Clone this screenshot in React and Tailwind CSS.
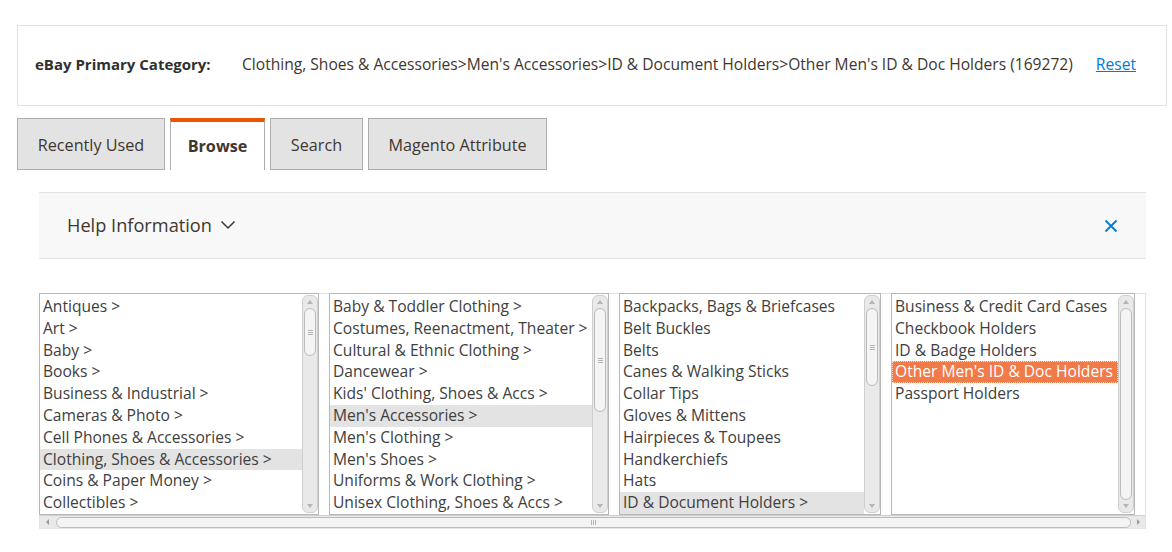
import React from 'react';

const col1 = ['Antiques >', 'Art >', 'Baby >', 'Books >', 'Business & Industrial >', 'Cameras & Photo >', 'Cell Phones & Accessories >', 'Clothing, Shoes & Accessories >', 'Coins & Paper Money >', 'Collectibles >'];
const col2 = ['Baby & Toddler Clothing >', 'Costumes, Reenactment, Theater >', 'Cultural & Ethnic Clothing >', 'Dancewear >', "Kids' Clothing, Shoes & Accs >", "Men's Accessories >", "Men's Clothing >", "Men's Shoes >", 'Uniforms & Work Clothing >', 'Unisex Clothing, Shoes & Accs >'];
const col3 = ['Backpacks, Bags & Briefcases', 'Belt Buckles', 'Belts', 'Canes & Walking Sticks', 'Collar Tips', 'Gloves & Mittens', 'Hairpieces & Toupees', 'Handkerchiefs', 'Hats', 'ID & Document Holders >'];
const col4 = ['Business & Credit Card Cases', 'Checkbook Holders', 'ID & Badge Holders', "Other Men's ID & Doc Holders", 'Passport Holders'];

const VScroll = ({ thumb, grip = true }) => (
    <div className="w-[16px] shrink-0 flex flex-col items-center bg-[#e9e9e9] border border-[#cfcfcf] rounded-[6px] my-[1px]">
        <svg width="8" height="12" viewBox="0 0 8 12" className="shrink-0"><path d="M1 8 L4 4 L7 8 Z" fill="#b5b5b5" /></svg>
        <div className="flex-1 w-full px-[1px] flex flex-col">
            <div className={`${thumb} w-full rounded-full bg-[#f4f4f4] border border-[#bcbcbc] flex items-center justify-center`}>
                {grip && (
                    <div className="flex flex-col gap-[1px]">
                        <div className="w-[5px] h-px bg-[#b5b5b5]" />
                        <div className="w-[5px] h-px bg-[#b5b5b5]" />
                        <div className="w-[5px] h-px bg-[#b5b5b5]" />
                    </div>
                )}
            </div>
        </div>
        <svg width="8" height="12" viewBox="0 0 8 12" className="shrink-0"><path d="M1 4 L4 8 L7 4 Z" fill="#b5b5b5" /></svg>
    </div>
);

const CategoryList = ({ items, width, thumb, grey, active, grip }) => (
    <div className={`${width} h-[222px] flex border border-[#b8b8b8] bg-white`}>
        <ul className="flex-1 overflow-hidden pt-[2px]">
            {items.map((item, i) => (
                <li
                    key={item}
                    className={`h-[21.8px] leading-[21.8px] px-[3px] whitespace-nowrap ${i === grey ? 'bg-[#e3e3e3]' : ''} ${i === active ? 'bg-[#f07a48] text-white outline outline-1 outline-dotted outline-[#ffd7c2] -outline-offset-1' : ''}`}
                >
                    {item}
                </li>
            ))}
        </ul>
        <VScroll thumb={thumb} grip={grip} />
    </div>
);

const App = () => {
    return (
        <div className="w-[1172px] h-[552px] bg-white text-[#41362f] overflow-hidden" style={{ fontFamily: '"Open Sans", "Noto Sans", sans-serif' }}>
            <div className="pt-[25px] pl-[17px] pr-[5px]">
                <div className="h-[81px] border border-[#e3e3e3] flex items-center pl-[17px] pr-[30px] pb-[2px] text-[15.6px]">
                    <span className="font-bold text-[15px] w-[207px] text-[#303030]">eBay Primary Category:</span>
                    <span className="flex-1">Clothing, Shoes &amp; Accessories&gt;Men's Accessories&gt;ID &amp; Document Holders&gt;Other Men's ID &amp; Doc Holders (169272)</span>
                    <a href="#" className="text-[#007bdb] underline">Reset</a>
                </div>

                <div className="flex gap-[5px] mt-[12px] text-[16.2px]">
                    <div className="w-[148px] h-[52px] flex items-center justify-center bg-[#e3e3e3] border border-[#adadad] pt-[2px]">Recently Used</div>
                    <div className="w-[95px] h-[52px] flex items-center justify-center bg-white border-x border-[#adadad] border-t-[4px] border-t-[#eb5202] font-bold">Browse</div>
                    <div className="w-[93px] h-[52px] flex items-center justify-center bg-[#e3e3e3] border border-[#adadad] pt-[2px]">Search</div>
                    <div className="w-[179px] h-[52px] flex items-center justify-center bg-[#e3e3e3] border border-[#adadad] pt-[2px]">Magento Attribute</div>
                </div>
            </div>

            <div className="ml-[39px] w-[1107px] mt-[22px]">
                <div className="h-[67px] bg-[#f8f8f8] border-y border-[#e3e3e3] flex items-center justify-between pl-[28px] pr-[28px]">
                    <div className="flex items-center gap-[8px] text-[18.2px]">
                        <span>Help Information</span>
                        <svg width="16" height="10" viewBox="0 0 16 10"><path d="M1.5 1.5 L8 8 L14.5 1.5" fill="none" stroke="#41362f" strokeWidth="1.5" /></svg>
                    </div>
                    <svg width="14" height="14" viewBox="0 0 14 14"><path d="M1.5 1.5 L12.5 12.5 M12.5 1.5 L1.5 12.5" stroke="#007bdb" strokeWidth="1.8" /></svg>
                </div>

                <div className="mt-[34px] border border-[#e3e3e3] text-[15.6px] text-[#404040]">
                    <div className="flex gap-[10px] -ml-px -mt-px">
                        <CategoryList items={col1} width="w-[280px]" thumb="h-[48px]" grey={7} />
                        <CategoryList items={col2} width="w-[280px]" thumb="h-[104px]" grey={5} />
                        <CategoryList items={col3} width="w-[262px]" thumb="h-[78px]" grey={9} />
                        <CategoryList items={col4} width="w-[244px]" thumb="h-full" active={3} grip={false} />
                    </div>
                    <div className="h-[13px] flex items-center bg-[#e9e9e9] border-t border-[#cfcfcf]">
                        <div className="w-[16px] flex justify-center">
                            <svg width="8" height="8" viewBox="0 0 8 8"><path d="M5 1 L2 4 L5 7 Z" fill="#9a9a9a" /></svg>
                        </div>
                        <div className="flex-1 h-[11px] rounded-full bg-[#f4f4f4] border border-[#bcbcbc] flex items-center justify-center gap-[1px]">
                            <div className="w-px h-[5px] bg-[#b5b5b5]" />
                            <div className="w-px h-[5px] bg-[#b5b5b5]" />
                            <div className="w-px h-[5px] bg-[#b5b5b5]" />
                        </div>
                        <div className="w-[14px] flex justify-center">
                            <svg width="8" height="8" viewBox="0 0 8 8"><path d="M3 1 L6 4 L3 7 Z" fill="#9a9a9a" /></svg>
                        </div>
                    </div>
                </div>
            </div>
        </div>
    );
};

export default App;
